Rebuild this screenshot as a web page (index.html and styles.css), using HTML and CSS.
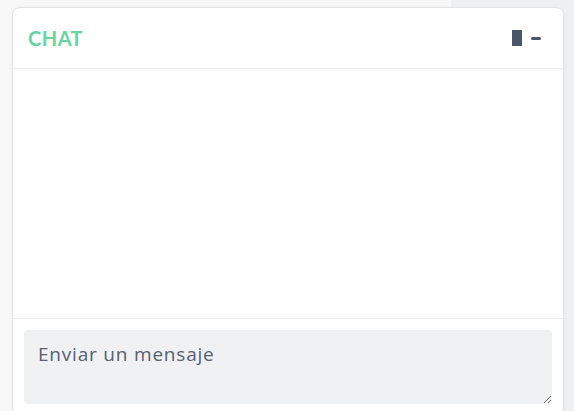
FILE: index.html
```html
<!DOCTYPE html>
<html lang="es">
<head>
<meta charset="utf-8">
<link rel="stylesheet" href="styles.css">
</head>
<body>
<div class="card">
  <div class="card-header">
    <span class="title">CHAT</span>
    <div class="controls">
      <span class="icon-box"></span>
      <span class="icon-dash"></span>
    </div>
  </div>
  <div class="card-body"></div>
  <div class="card-footer">
    <textarea class="input" placeholder="Enviar un mensaje"></textarea>
  </div>
</div>
</body>
</html>
```
FILE: styles.css
```css
html, body {
  margin: 0;
  height: 100%;
}
body {
  background: linear-gradient(to right, #f8f8f9 451px, #eff0f2 451px);
  font-family: Lato, "Noto Sans", sans-serif;
  overflow: hidden;
}
.card {
  margin: 7px 0 0 12px;
  width: 550px;
  background: #fff;
  border: 1px solid #e2e4e8;
  border-radius: 8px;
  box-shadow: 0 1px 4px rgba(0,0,0,0.05);
}
.card-header {
  height: 60px;
  display: flex;
  align-items: center;
  justify-content: space-between;
  padding: 0 22px 0 15px;
  border-bottom: 1px solid #edeef0;
}
.title {
  font-size: 20px;
  font-weight: 700;
  color: #66d59f;
  letter-spacing: 0.5px;
}
.controls {
  display: flex;
  align-items: center;
  gap: 9px;
}
.icon-box {
  width: 10px;
  height: 16px;
  background: #4a5568;
}
.icon-dash {
  width: 10px;
  height: 3px;
  border-radius: 2px;
  background: #4a5568;
}
.card-body {
  height: 249px;
}
.card-footer {
  border-top: 1px solid #edeef0;
  padding: 11px;
}
.input {
  display: block;
  box-sizing: border-box;
  width: 528px;
  height: 74px;
  border: none;
  border-radius: 4px;
  background: #f0f1f3;
  padding: 11px 14px;
  font-family: "Open Sans", "Noto Sans", sans-serif;
  font-size: 19px;
  letter-spacing: 0.8px;
  color: #4a5568;
  outline: none;
}
.input::placeholder {
  color: #556072;
}
```
